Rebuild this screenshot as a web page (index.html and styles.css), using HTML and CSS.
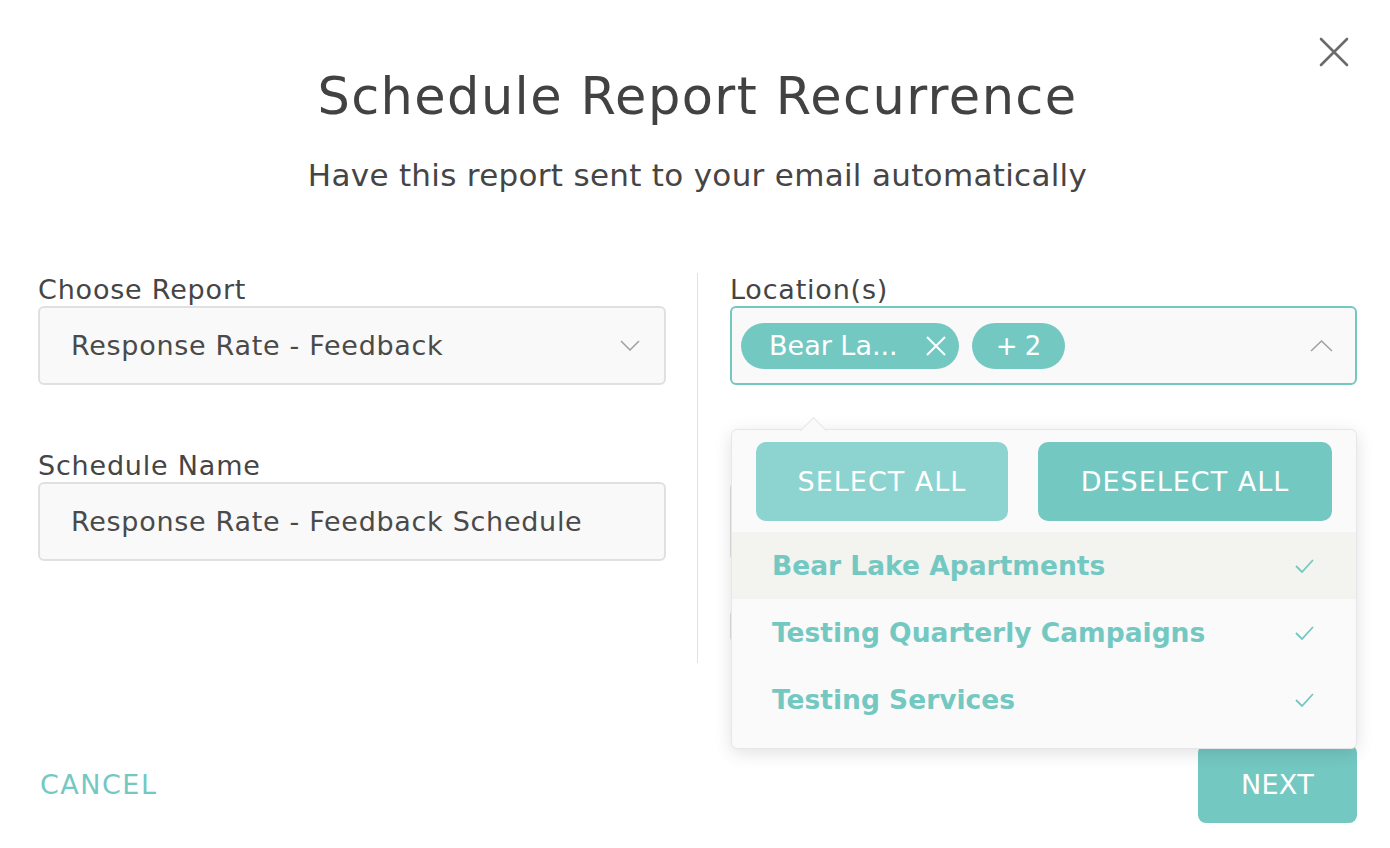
FILE: index.html
```html
<!DOCTYPE html>
<html lang="en">
<head>
<meta charset="utf-8">
<title>Schedule Report Recurrence</title>
<link rel="stylesheet" href="styles.css">
</head>
<body>
<div class="modal">
  <button class="close" aria-label="Close">
    <svg width="30" height="30" viewBox="0 0 30 30"><path d="M2 2 L28 28 M28 2 L2 28" stroke="#6b6b6b" stroke-width="2.6" fill="none" stroke-linecap="round"/></svg>
  </button>
  <h1 class="title">Schedule Report Recurrence</h1>
  <p class="subtitle">Have this report sent to your email automatically</p>

  <div class="columns">
    <div class="col">
      <div class="field">
        <div class="label">Choose Report</div>
        <div class="input select">
          <span>Response Rate - Feedback</span>
          <svg class="chev" width="20" height="11" viewBox="0 0 20 11"><path d="M1 1 L10 10 L19 1" stroke="#a0a0a0" stroke-width="1.5" fill="none"/></svg>
        </div>
      </div>
      <div class="field">
        <div class="label">Schedule Name</div>
        <div class="input"><span>Response Rate - Feedback Schedule</span></div>
      </div>
    </div>

    <div class="divider"></div>

    <div class="col right">
      <div class="field">
        <div class="label">Location(s)</div>
        <div class="input select active">
          <div class="chips">
            <span class="chip">Bear La...
              <svg class="chip-x" width="20" height="20" viewBox="0 0 20 20"><path d="M1 1 L19 19 M19 1 L1 19" stroke="#fff" stroke-width="2" fill="none"/></svg>
            </span>
            <span class="chip more">+ 2</span>
          </div>
          <svg class="chev up" width="23" height="12" viewBox="0 0 23 12"><path d="M1 11 L11.5 1 L22 11" stroke="#a0a0a0" stroke-width="1.5" fill="none"/></svg>
        </div>
      </div>
      <div class="field hidden-field">
        <div class="input"></div>
      </div>
      <div class="toggle-box"></div>

      <div class="dropdown">
        <div class="dd-actions">
          <button class="dd-btn light">SELECT ALL</button>
          <button class="dd-btn">DESELECT ALL</button>
        </div>
        <div class="dd-item hover">
          <span>Bear Lake Apartments</span>
          <svg width="19" height="14" viewBox="0 0 19 14"><path d="M1 7 L7 13 L18 1" stroke="#74c8c2" stroke-width="1.8" fill="none"/></svg>
        </div>
        <div class="dd-item">
          <span>Testing Quarterly Campaigns</span>
          <svg width="19" height="14" viewBox="0 0 19 14"><path d="M1 7 L7 13 L18 1" stroke="#74c8c2" stroke-width="1.8" fill="none"/></svg>
        </div>
        <div class="dd-item">
          <span>Testing Services</span>
          <svg width="19" height="14" viewBox="0 0 19 14"><path d="M1 7 L7 13 L18 1" stroke="#74c8c2" stroke-width="1.8" fill="none"/></svg>
        </div>
      </div>
    </div>
  </div>

  <div class="footer">
    <button class="cancel">CANCEL</button>
    <button class="next">NEXT</button>
  </div>
</div>
</body>
</html>
```

FILE: styles.css
```css
* { box-sizing: border-box; }
html, body { margin: 0; padding: 0; background: #fff; }
body {
  font-family: "DejaVu Sans", "Open Sans", sans-serif;
  color: #454545;
}
button { font-family: inherit; border: none; background: none; padding: 0; cursor: pointer; }

.modal {
  position: relative;
  width: 1390px;
  height: 848px;
  padding: 68px 33px 0 38px;
  overflow: hidden;
}

.close {
  position: absolute;
  top: 37px;
  right: 41px;
  width: 30px;
  height: 30px;
  display: flex;
}

.title {
  margin: 0;
  text-align: center;
  font-size: 51px;
  line-height: 58px;
  font-weight: 400;
  letter-spacing: 1.4px;
  color: #424242;
}
.subtitle {
  margin: 31px 0 0;
  text-align: center;
  font-size: 31px;
  line-height: 36px;
  letter-spacing: 0.3px;
  color: #454545;
}

.columns {
  display: flex;
  margin-top: 81px;
  min-height: 389px;
}
.col { width: 628px; display: flex; flex-direction: column; }
.col.right { position: relative; width: 627px; }
.divider { width: 1px; background: #e2e2e4; margin: -1px 32px 0 31px; }

.field { display: flex; flex-direction: column; margin-bottom: 65px; }
.label { font-size: 27px; line-height: 32px; letter-spacing: 0.8px; color: #454545; }
.input {
  height: 79px;
  border: 2px solid #e0e0e3;
  border-radius: 6px;
  background: #f9f9f9;
  display: flex;
  align-items: center;
  justify-content: space-between;
  padding: 0 24px 0 31px;
  font-size: 27px;
  letter-spacing: 0.7px;
  color: #4a4a4a;
}
.input.active { border-color: #74c8c2; padding-left: 9px; padding-right: 22px; letter-spacing: 0; }
.hidden-field { padding-top: 32px; }

.chips { display: flex; gap: 13px; }
.chip {
  height: 46px;
  border-radius: 23px;
  background: #74c8c2;
  color: #fff;
  display: flex;
  align-items: center;
  padding: 0 13px 0 28px;
  font-size: 27px;
}
.chip-x { margin-left: 28px; }
.chip.more { padding: 0 24px; font-size: 26px; letter-spacing: -0.5px; }

.toggle-box {
  width: 60px;
  height: 30px;
  margin-top: -15px;
  border: 2px solid #e0e0e3;
  border-radius: 4px;
}

.dropdown {
  position: absolute;
  top: 155px;
  left: 1px;
  width: 626px;
  background: #fafafa;
  border: 1px solid #e6e6ea;
  border-radius: 6px;
  box-shadow: 0 4px 18px rgba(0, 0, 0, 0.12);
  padding-bottom: 15px;
  z-index: 5;
}
.dropdown::before {
  content: "";
  position: absolute;
  top: -9px;
  left: 72px;
  width: 18px;
  height: 18px;
  background: #fafafa;
  border-top: 1px solid #e6e6ea;
  border-left: 1px solid #e6e6ea;
  transform: rotate(45deg);
}
.dd-actions {
  position: relative;
  display: flex;
  justify-content: space-between;
  padding: 12px 24px 11px 24px;
}
.dd-btn {
  height: 79px;
  border-radius: 10px;
  background: #74c8c2;
  color: #fff;
  font-size: 27px;
  letter-spacing: 1px;
  padding: 0;
}
.dd-btn.light { background: #8dd3cf; width: 252px; }
.dd-btn:not(.light) { width: 294px; }
.dd-item {
  height: 67px;
  display: flex;
  align-items: center;
  justify-content: space-between;
  padding: 0 42px 0 40px;
  font-size: 26.5px;
  font-weight: 700;
  color: #74c8c2;
}
.dd-item.hover { background: #f3f3f0; }

.footer {
  display: flex;
  justify-content: space-between;
  align-items: center;
  margin-top: 82px;
}
.cancel {
  color: #74c8c2;
  font-size: 27px;
  letter-spacing: 1.5px;
  margin-left: 2px;
}
.next {
  width: 159px;
  height: 78px;
  border-radius: 8px;
  background: #74c8c2;
  color: #fff;
  font-size: 27px;
  letter-spacing: 0.3px;
}
```
